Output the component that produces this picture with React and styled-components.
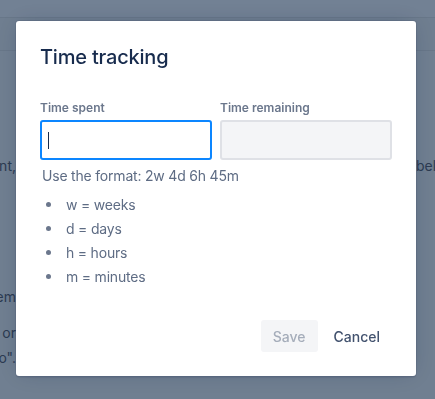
import React from "react"
import styled, { createGlobalStyle } from "styled-components"

const GlobalStyle = createGlobalStyle`
  html, body {
    margin: 0;
    padding: 0;
    height: 100%;
    overflow: hidden;
    font-family: Inter, "Liberation Sans", sans-serif;
    -webkit-font-smoothing: antialiased;
  }
`

// the page that sits behind the dimmed backdrop
const Page = styled.div`
  width: 100vw;
  height: 100vh;
  background: #707f91;
  color: #2c3b52;
  font-size: 14px;
  line-height: 24px;
`

const TopBand = styled.div`
  height: 17px;
  background: #728194;
  border-bottom: 1px solid #687789;
`

const SubBand = styled.div`
  height: 32px;
  background: #6f7e90;
  border-bottom: 1px solid #687789;
`

const Line = styled.div`
  display: grid;
  grid-template-columns: 16px 400px 1fr;
  margin-top: ${p => p.$top}px;
  height: 24px;
`

const LeftCut = styled.div`
  display: flex;
  justify-content: flex-end;
  white-space: nowrap;
`

const RightCut = styled.div`
  grid-column: 3;
  white-space: nowrap;
`

// dialog
const Modal = styled.div`
  position: fixed;
  top: 21px;
  left: 16px;
  width: 400px;
  height: 355px;
  box-sizing: border-box;
  background: #fff;
  border-radius: 3px;
  box-shadow: 0 0 0 1px rgba(9, 30, 66, 0.08), 0 2px 1px rgba(9, 30, 66, 0.08),
    0 0 20px -6px rgba(9, 30, 66, 0.31);
  display: flex;
  flex-direction: column;
  padding: 24px;
`

const Title = styled.h1`
  margin: 0;
  font-size: 20px;
  line-height: 24px;
  font-weight: 500;
  color: #172b4d;
  letter-spacing: -0.2px;
`

const Fields = styled.div`
  display: grid;
  grid-template-columns: 1fr 1fr;
  column-gap: 8px;
  margin-top: 31px;
`

const Field = styled.div`
  display: flex;
  flex-direction: column;
`

const Label = styled.label`
  font-size: 12px;
  line-height: 16px;
  font-weight: 600;
  color: #6b778c;
  margin-bottom: 4px;
`

const Input = styled.div`
  height: 40px;
  box-sizing: border-box;
  border-radius: 3px;
  border: 2px solid ${p => (p.$focused ? "#0c86ff" : "#dfe1e6")};
  background: ${p => (p.$focused ? "#fff" : "#f4f5f7")};
  display: flex;
  align-items: center;
  padding-left: 6px;
`

const Caret = styled.span`
  width: 1px;
  height: 17px;
  background: #172b4d;
`

const Hint = styled.p`
  margin: 6px 0 0 2px;
  font-size: 14px;
  line-height: 20px;
  color: #5e6c84;
  letter-spacing: -0.2px;
`

const List = styled.ul`
  margin: 6px 0 0;
  padding: 0;
  list-style: none;
`

const Item = styled.li`
  display: flex;
  align-items: center;
  height: 24px;
  font-size: 14px;
  color: #5e6c84;
  letter-spacing: -0.2px;
  padding-left: 26px;
  position: relative;

  &::before {
    content: "";
    position: absolute;
    left: 6px;
    top: 10px;
    width: 5px;
    height: 5px;
    border-radius: 50%;
    background: #6b778c;
  }
`

const Footer = styled.div`
  margin-top: auto;
  display: flex;
  justify-content: flex-end;
  gap: 4px;
`

const Button = styled.button`
  height: 32px;
  border: none;
  border-radius: 3px;
  padding: 0 12px;
  font-family: inherit;
  font-size: 14px;
  font-weight: 500;
  background: ${p => (p.$disabled ? "#f4f5f7" : "transparent")};
  color: ${p => (p.$disabled ? "#a5adba" : "#42526e")};
`

const units = ["w = weeks", "d = days", "h = hours", "m = minutes"]

export default function App() {
  return (
    <>
      <GlobalStyle />
      <Page>
        <TopBand />
        <SubBand />
        <Line $top={103}>
          <LeftCut>nt,</LeftCut>
          <RightCut>bel</RightCut>
        </Line>
        <Line $top={107}>
          <LeftCut>em</LeftCut>
        </Line>
        <Line $top={12}>
          <LeftCut>or</LeftCut>
        </Line>
        <Line $top={1}>
          <LeftCut>o".</LeftCut>
        </Line>
      </Page>

      <Modal>
        <Title>Time tracking</Title>
        <Fields>
          <Field>
            <Label>Time spent</Label>
            <Input $focused>
              <Caret />
            </Input>
          </Field>
          <Field>
            <Label>Time remaining</Label>
            <Input />
          </Field>
        </Fields>
        <Hint>Use the format: 2w 4d 6h 45m</Hint>
        <List>
          {units.map(u => (
            <Item key={u}>{u}</Item>
          ))}
        </List>
        <Footer>
          <Button $disabled>Save</Button>
          <Button>Cancel</Button>
        </Footer>
      </Modal>
    </>
  )
}
